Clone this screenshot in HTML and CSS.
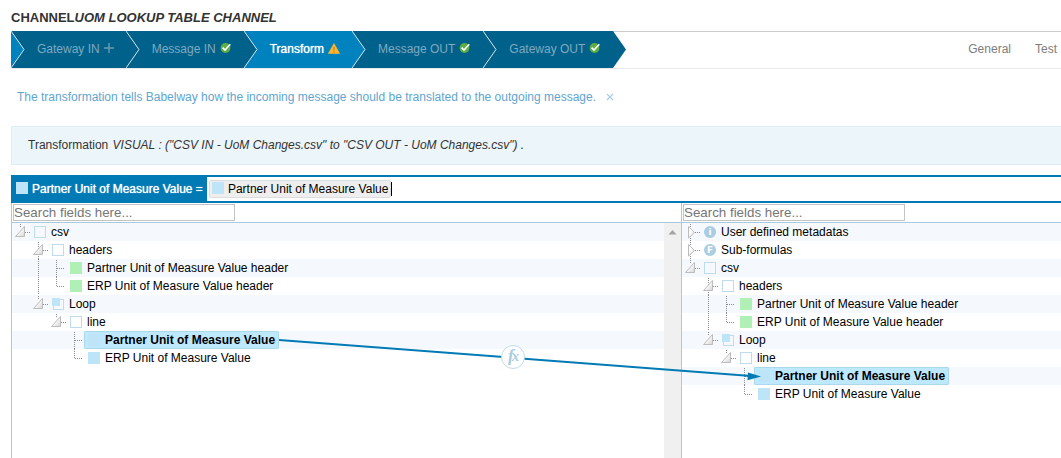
FILE: index.html
```html
<!DOCTYPE html>
<html lang="en">
<head>
<meta charset="utf-8">
<title>UOM Lookup Table Channel</title>
<link rel="stylesheet" href="styles.css">
</head>
<body>
<svg class="defs" aria-hidden="true">
  <defs>
    <linearGradient id="shade" x1="0" y1="0" x2="1" y2="1"><stop offset="0.4" stop-color="#fff"/><stop offset="1" stop-color="#d4d4d4"/></linearGradient>
    <symbol id="chevron" viewBox="0 0 14 37"><path class="fill" d="M0 0L13 18.500L0 37Z"/><path class="edge" d="M0 0L13 18.500L0 37"/></symbol>
    <symbol id="ok" viewBox="0 0 12 12"><circle cx="5.500" cy="5" r="4.900" fill="#5fae45"/><path d="M2.600 4.600L5 7L10.300 1.200" fill="none" stroke="#fff" stroke-width="1.600"/></symbol>
    <symbol id="warn" viewBox="0 0 12 12"><path d="M6 .6L11.700 10.400H.3Z" fill="#fdb52b" stroke="#fdb52b" stroke-width=".6" stroke-linejoin="round"/><path d="M6 4v3.500M6 8.300v1.200" stroke="#b98530" stroke-width="1.200"/></symbol>
    <symbol id="plus" viewBox="0 0 10 12"><path d="M5 0v10M0 5h10" stroke="#6a9ab3" stroke-width="1.400"/></symbol>
    <symbol id="open" viewBox="0 0 18 18"><path class="dots" d="M8.500 1v4M13 9.500h5"/><path d="M12.500 3.500V13.500H3.500Z" fill="url(#shade)" stroke="#bcbcbc"/></symbol>
    <symbol id="open-through" viewBox="0 0 18 18"><path class="dots" d="M8.500 1v17M13 9.500h5"/><path d="M12.500 3.500V13.500H3.500Z" fill="url(#shade)" stroke="#bcbcbc"/></symbol>
    <symbol id="closed" viewBox="0 0 18 18"><path class="dots" d="M8.500 1v17M13 9.500h5"/><path d="M6.500 3.500L12.500 9.500L6.500 15Z" fill="url(#shade)" stroke="#bcbcbc"/></symbol>
    <symbol id="through" viewBox="0 0 18 18"><path class="dots" d="M8.500 0v18"/></symbol>
    <symbol id="tee" viewBox="0 0 18 18"><path class="dots" d="M8.500 1v17M9 9.500h8"/></symbol>
    <symbol id="elbow" viewBox="0 0 18 18"><path class="dots" d="M8.500 0v10M9 9.500h8"/></symbol>
  </defs>
</svg>

<h1 class="title">CHANNEL<em>UOM LOOKUP TABLE CHANNEL</em></h1>

<nav class="steps">
  <a class="step" href="#gateway-in"><svg class="chevron start"><use href="#chevron"/></svg>Gateway IN<svg class="status narrow"><use href="#plus"/></svg><svg class="chevron"><use href="#chevron"/></svg></a>
  <a class="step" href="#message-in">Message IN<svg class="status"><use href="#ok"/></svg><svg class="chevron"><use href="#chevron"/></svg></a>
  <a class="step current" href="#transform">Transform<svg class="status"><use href="#warn"/></svg><svg class="chevron"><use href="#chevron"/></svg></a>
  <a class="step" href="#message-out">Message OUT<svg class="status"><use href="#ok"/></svg><svg class="chevron"><use href="#chevron"/></svg></a>
  <a class="step" href="#gateway-out">Gateway OUT<svg class="status"><use href="#ok"/></svg><svg class="chevron last"><use href="#chevron"/></svg></a>
  <div class="links"><a href="#general">General</a><a href="#test">Test</a></div>
</nav>

<p class="hint">The transformation tells Babelway how the incoming message should be translated to the outgoing message.<button class="close" type="button" aria-label="Close"><svg viewBox="0 0 8 8"><path d="M1 1L7 7M7 1L1 7"/></svg></button></p>

<p class="summary">Transformation <em>VISUAL : ("CSV IN - UoM Changes.csv" to "CSV OUT - UoM Changes.csv") .</em></p>

<div class="formula">
  <label class="target" for="formula"><i class="box blue"></i>Partner Unit of Measure Value =</label>
  <div class="editor"><span class="chip"><i class="box blue"></i>Partner Unit of Measure Value</span><span class="caret"></span><input id="formula" class="entry" type="text"></div>
</div>

<main class="workspace">
  <section class="panel">
    <div class="search"><input type="text" placeholder="Search fields here..." aria-label="Search input fields"></div>
    <div class="body">
      <ul class="tree">
        <li><svg><use href="#open"/></svg><span class="node"><i class="box"></i>csv</span></li>
        <li><svg></svg><svg><use href="#open-through"/></svg><span class="node"><i class="box"></i>headers</span></li>
        <li><svg></svg><svg><use href="#through"/></svg><svg><use href="#tee"/></svg><span class="node"><i class="box green"></i>Partner Unit of Measure Value header</span></li>
        <li><svg></svg><svg><use href="#through"/></svg><svg><use href="#elbow"/></svg><span class="node"><i class="box green"></i>ERP Unit of Measure Value header</span></li>
        <li><svg></svg><svg><use href="#open"/></svg><span class="node"><i class="loop"></i>Loop</span></li>
        <li><svg></svg><svg></svg><svg><use href="#open"/></svg><span class="node"><i class="box"></i>line</span></li>
        <li><svg></svg><svg></svg><svg></svg><svg><use href="#tee"/></svg><span class="node selected"><i class="box blue"></i>Partner Unit of Measure Value</span></li>
        <li><svg></svg><svg></svg><svg></svg><svg><use href="#elbow"/></svg><span class="node"><i class="box blue"></i>ERP Unit of Measure Value</span></li>
      </ul>
      <div class="scroll"><svg viewBox="0 0 17 18"><path d="M4.500 11.500L8.500 7L12.500 11.500Z" fill="#a3a3a3"/></svg></div>
    </div>
  </section>
  <section class="panel">
    <div class="search"><input type="text" placeholder="Search fields here..." aria-label="Search output fields"></div>
    <div class="body">
      <ul class="tree">
        <li><svg><use href="#closed"/></svg><span class="node"><i class="badge">i</i>User defined metadatas</span></li>
        <li><svg><use href="#closed"/></svg><span class="node"><i class="badge">F</i>Sub-formulas</span></li>
        <li><svg><use href="#open"/></svg><span class="node"><i class="box"></i>csv</span></li>
        <li><svg></svg><svg><use href="#open-through"/></svg><span class="node"><i class="box"></i>headers</span></li>
        <li><svg></svg><svg><use href="#through"/></svg><svg><use href="#tee"/></svg><span class="node"><i class="box green"></i>Partner Unit of Measure Value header</span></li>
        <li><svg></svg><svg><use href="#through"/></svg><svg><use href="#elbow"/></svg><span class="node"><i class="box green"></i>ERP Unit of Measure Value header</span></li>
        <li><svg></svg><svg><use href="#open"/></svg><span class="node"><i class="loop"></i>Loop</span></li>
        <li><svg></svg><svg></svg><svg><use href="#open"/></svg><span class="node"><i class="box"></i>line</span></li>
        <li><svg></svg><svg></svg><svg></svg><svg><use href="#tee"/></svg><span class="node selected"><i class="box blue"></i>Partner Unit of Measure Value</span></li>
        <li><svg></svg><svg></svg><svg></svg><svg><use href="#elbow"/></svg><span class="node"><i class="box blue"></i>ERP Unit of Measure Value</span></li>
      </ul>
    </div>
  </section>
  <svg class="connector" viewBox="0 0 484 48">
    <path d="M0 4L472 40" stroke="#007ab5" stroke-width="2"/>
    <path d="M469 36.500L482 40.500L468.500 44.200Z" fill="#007ab5"/>
    <circle cx="234" cy="21" r="11.500" fill="#fff" stroke="#bddbea"/>
    <text class="fx" x="229" y="25">f</text><text class="fx small" x="233" y="25">x</text>
  </svg>
</main>
</body>
</html>
```
FILE: styles.css
```css
* { box-sizing: border-box; }
body {
  margin: 0;
  padding: 9px 0 0 11px;
  min-height: 100vh;
  display: flex;
  flex-direction: column;
  background: #fff;
  color: #000;
  font: 12px/18px "Liberation Sans", Arial, sans-serif;
  overflow-x: hidden;
}
.defs { position: absolute; width: 0; height: 0; }
.title {
  margin: 0 0 5px;
  font-size: 13px;
  line-height: 17px;
  font-weight: bold;
  color: #333;
}

.steps {
  display: flex;
  height: 38px;
  border-top: 1px solid #ccc;
  border-bottom: 1px solid #eaeaea;
  line-height: 16px;
}
.step {
  position: relative;
  display: flex;
  align-items: center;
  gap: 4px;
  height: 37px;
  margin-top: -1px;
  padding: 0 12px 2px 26px;
  background: #00618b;
  color: #7fa9c0;
  text-decoration: none;
  white-space: nowrap;
}
.current { background: #0082be; color: #fff; text-shadow: 0 0 1px #fff; }
.status { width: 12px; height: 12px; }
.narrow { width: 10px; }
.chevron {
  position: absolute;
  top: 0;
  left: 100%;
  width: 14px;
  height: 37px;
  z-index: 1;
  fill: #00618b;
  stroke: #d5e6ef;
}
.fill { stroke: none; }
.edge { fill: none; }
.current .chevron, .start { fill: #0082be; }
.start { left: 0; }
.last { stroke: none; }
.links {
  display: flex;
  align-items: center;
  gap: 24px;
  margin-left: auto;
  padding: 0 4px 2px 0;
}
.links a { color: #7d7d7d; text-decoration: none; }

.hint {
  display: flex;
  align-items: center;
  gap: 10px;
  margin: 19px 0 20px;
  padding-left: 6px;
  color: #5fa5d0;
}
.close { display: flex; padding: 0; border: 0; background: none; }
.close svg { width: 8px; height: 8px; stroke: #a9cde4; stroke-width: 1.2; }
.summary {
  margin: 0 0 10px;
  padding: 9px 16px 10px;
  border: 1px solid #deecf4;
  border-right: 0;
  background: #ecf5f9;
  color: #333;
}
.summary em { margin-left: 1px; }

.formula {
  display: flex;
  height: 28px;
  border: solid #007ab5;
  border-width: 2px 0;
}
.target {
  display: flex;
  align-items: center;
  gap: 4px;
  padding: 0 4px 0 5px;
  background: #007ab5;
  color: #fff;
  text-shadow: 0 0 1px #fff;
}
.editor { flex: 1; display: flex; align-items: center; padding-left: 2px; }
.chip {
  display: flex;
  align-items: center;
  gap: 4px;
  height: 18px;
  padding: 0 2px;
  border: 1px solid #ddd;
  border-radius: 2px;
  background: #eee;
}
.caret { width: 1px; height: 14px; background: #000; }
.entry { flex: 1; min-width: 0; border: 0; padding: 0; background: none; outline: 0; }

.box { width: 12px; height: 12px; border: 1px solid #bfdcee; }
.blue { border: 0; background: #bee4f8; }
.green { border: 0; background: #b0efb6; }
.target .box { margin-bottom: 3px; }
.chip .box { margin-bottom: 2px; }
.loop { display: grid; width: 12px; height: 12px; }
.loop::before, .loop::after { content: ""; grid-area: 1 / 1; }
.loop::before {
  place-self: end;
  width: 9px;
  height: 9px;
  border: 1px solid #bfdcee;
}
.loop::after { width: 8px; height: 8px; background: #bee4f8; }
.badge {
  width: 12px;
  height: 12px;
  border-radius: 50%;
  background: #a9cde2;
  color: #fff;
  font: bold 9px/12px "DejaVu Sans", sans-serif;
  text-align: center;
}

.workspace {
  position: relative;
  flex: 1;
  display: grid;
  grid-template-columns: 670fr 380fr;
}
.panel { display: flex; flex-direction: column; border-left: 1px solid #aac9dc; }
.search {
  display: flex;
  height: 20px;
  padding: 1px;
  border-bottom: 1px solid #aac9dc;
}
.search input {
  width: 222px;
  height: 17px;
  padding: 0;
  border: 1px solid #c4c4c4;
  font-family: "Liberation Sans", Arial, sans-serif;
}
.body { flex: 1; display: flex; }
.tree { flex: 1; margin: 0; padding: 0; list-style: none; }
.tree li { display: flex; height: 18px; }
.tree li:nth-child(odd) { background: #f5f9fe; }
.tree svg { width: 18px; height: 18px; }
.dots { fill: none; stroke: #8c8c8c; stroke-dasharray: 1 1; }
.node { display: flex; align-items: center; gap: 5px; padding: 0 4px; }
.selected {
  background: #bee8fe;
  box-shadow: inset 0 0 0 1px #acd8ec;
  border-radius: 2px;
  font-weight: bold;
}
.scroll { width: 17px; background: #f0f0f0; }
.scroll svg { display: block; width: 17px; height: 18px; }
.connector {
  position: absolute;
  left: 268px;
  top: 133px;
  width: 484px;
  height: 48px;
  pointer-events: none;
}
.fx { font: italic bold 17px "Liberation Serif", serif; fill: #a6cde1; }
.small { font-size: 14px; }
```
